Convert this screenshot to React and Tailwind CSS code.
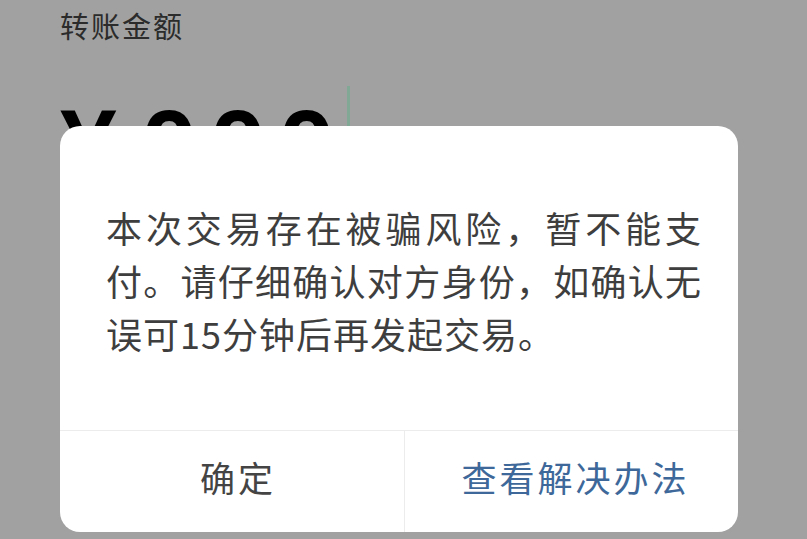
import React from "react";

const CJK = "font-['Noto_Sans_CJK_SC','Noto_Sans',sans-serif]";

function AmountField() {
  return (
    <div className="pl-[60px] pt-[5px]">
      <div className={`${CJK} text-[29px] leading-[40px] tracking-[2px] text-[#2b2b2b]`}>
        转账金额
      </div>
      <div className="mt-[51px] flex items-start font-['Liberation_Sans',sans-serif] font-bold text-[102px] leading-[100px] text-black">
        <span className="mr-[24px]">¥</span>
        <span className="tracking-[12px]">000</span>
        <span className="mt-[-10px] w-[3px] h-[60px] bg-[#80a894]" />
      </div>
    </div>
  );
}

function RiskDialog() {
  return (
    <div className="absolute left-[60px] top-[126px] w-[678px] h-[406px] rounded-[20px] bg-white flex flex-col overflow-hidden">
      <div className={`${CJK} h-[304px] pt-[75px] pl-[46px] text-[36px] leading-[53px] tracking-[1px] text-[#3e3e3e]`}>
        <div className="w-[596px] text-justify [text-align-last:justify]">本次交易存在被骗风险，暂不能支</div>
        <div className="w-[596px] text-justify [text-align-last:justify]">付。请仔细确认对方身份，如确认无</div>
        <div className="w-[596px]">误可15分钟后再发起交易。</div>
      </div>
      <div className={`${CJK} flex flex-1 border-t border-[#ececec] text-[35px] tracking-[3px]`}>
        <button className="w-[345px] pl-[12px] pb-[8px] flex items-center justify-center text-[#444444] border-r border-[#ececec]">
          确定
        </button>
        <button className="flex-1 pl-[8px] pb-[8px] flex items-center justify-center text-[#3d6899]">
          查看解决办法
        </button>
      </div>
    </div>
  );
}

export default function App() {
  return (
    <div className="relative w-[807px] h-[539px] overflow-hidden bg-[#a1a1a1]">
      <AmountField />
      <RiskDialog />
    </div>
  );
}
